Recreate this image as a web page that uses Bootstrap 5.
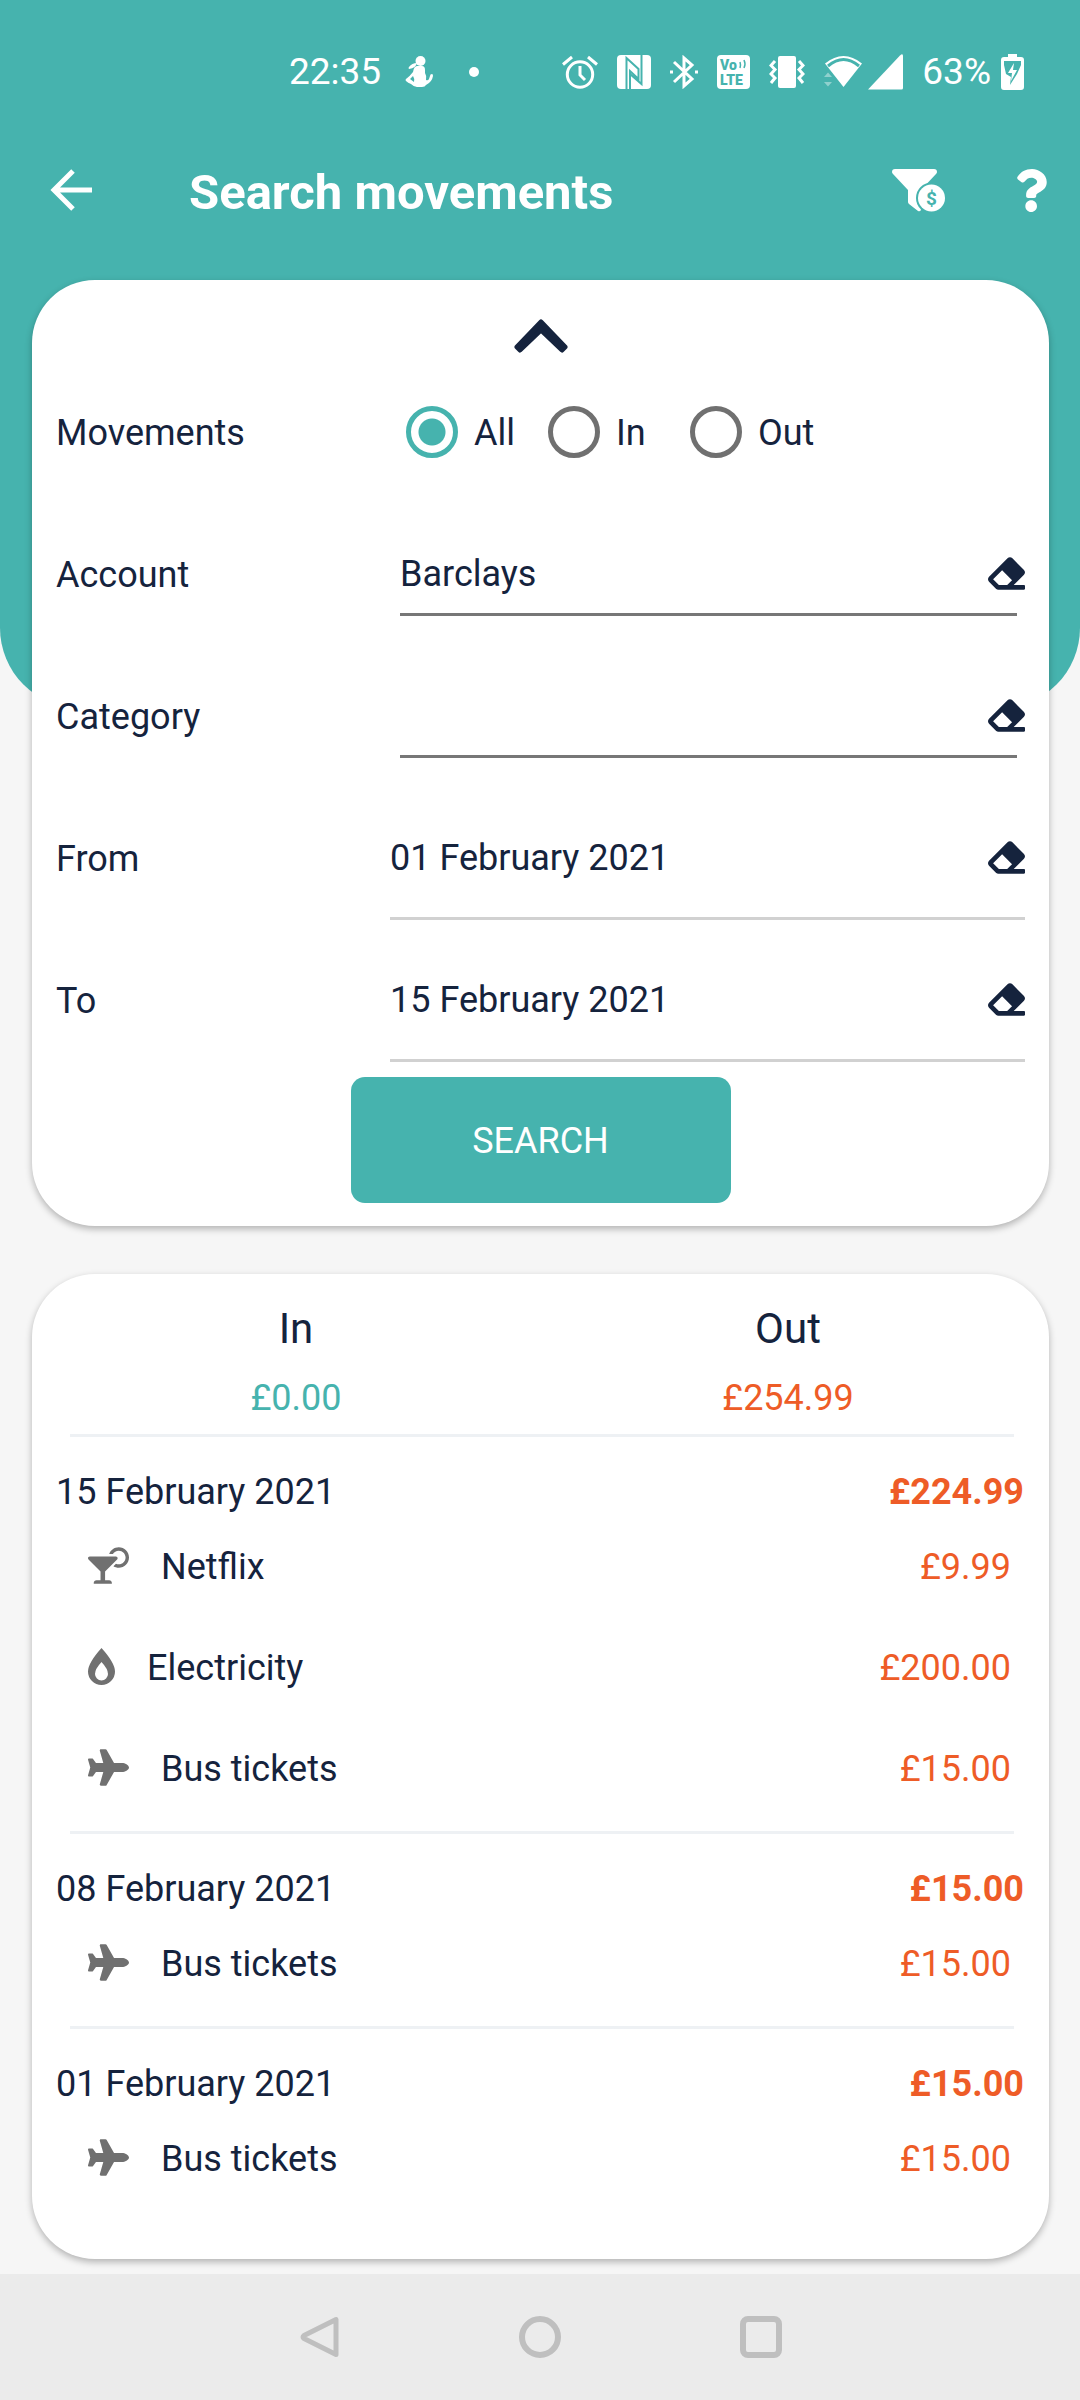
<!DOCTYPE html>
<html lang="en">
<head>
<meta charset="utf-8">
<meta name="viewport" content="width=device-width, initial-scale=1">
<title>Search movements</title>
<link href="https://cdn.jsdelivr.net/npm/bootstrap@5.3.0/dist/css/bootstrap.min.css" rel="stylesheet">
<style>
  :root { --teal: #46b3ae; --ink: #15233d; --orange: #ee5c27; --muted: #707070; }
  body { font-family: Roboto, "Noto Sans", sans-serif; font-size: 36px; line-height: 42px; color: var(--ink); background: #f6f6f6; }
  svg { display: block; flex: none; }
  .icon-btn { padding: 0; border: 0; background: none; color: inherit; display: block; }

  .hero { background: var(--teal); color: #fff; min-height: 708px; border-radius: 0 0 80px 80px; }
  .status { height: 144px; padding: 0 56px 0 289px; font-size: 37px; }
  .status-icons { gap: 19px; }
  .status-pair { gap: 5px; }
  .status-battery { gap: 10px; }
  .status-dot { width: 10px; height: 10px; margin-left: 36px; }
  .topbar { height: 92px; padding: 0 33px 0 50px; }
  .topbar h1 { font-size: 49px; line-height: 60px; font-weight: 700; margin: 6px 0 0 97px; }
  .topbar-actions { gap: 72px; }

  .content { margin: -428px 31px 14px 32px; }
  .panel { background: #fff; border-radius: 63px; box-shadow: 0 3px 7px rgba(0, 0, 0, .28); }
  .filters { padding: 0 24px 23px; margin-bottom: 48px; }
  .collapse-row { height: 81px; padding-top: 39px; }
  .filter-row { height: 142px; }
  .filter-name { flex: 0 0 334px; padding-top: 2px; }
  .radio-set { padding-left: 16px; }
  .radio-option { flex: 0 0 142px; gap: 16px; }
  .radio-option label { padding-top: 2px; }
  .radio-option .form-check-input { float: none; width: 52px; height: 52px; margin: 0; border: 5px solid var(--muted); background: none; box-shadow: none; }
  .radio-option .form-check-input:checked { border-color: var(--teal); background: radial-gradient(circle, var(--teal) 13px, transparent 14px); }
  .line-input { font-size: 36px; line-height: 42px; color: var(--ink); background: none; border: 0; border-radius: 0; padding: 0 48px 0 0; width: 100%; }
  .line-input:focus { outline: 0; }
  .line-picker { height: 84px; padding-top: 2px; border-bottom: 3px solid #777; }
  .picker-wrap { padding: 0 8px 0 10px; }
  .line-date { height: 124px; padding-top: 3px; border-bottom: 3px solid #d1d1d1; }
  .clear-btn { right: 0; top: 50%; margin-top: -17px; }
  .btn-search { width: 380px; max-width: 100%; height: 126px; margin-top: 6px; font-size: 36px; line-height: 42px; border-radius: 14px; color: #fff; background: var(--teal); border: 0; padding: 2px 0 0; }

  .results { padding: 30px 0 51px; }
  .totals { padding: 0 15px 0 18px; margin-bottom: 15px; }
  .totals h2 { font-size: 42px; line-height: 50px; font-weight: 400; margin: 0 0 23px; }
  .day { border: 0; padding: 0 25px 0 24px; }
  .day::before { content: ""; display: block; height: 3px; margin: 0 10px 34px 14px; background: #eef1f4; }
  .day + .day { margin-top: 13px; }
  .entries { padding: 2px 13px 0 32px; }
  .entry { height: 101px; gap: 32px; }
  .entry span { padding-top: 2px; }
  .entry svg { color: var(--muted); }
  .teal-text { color: var(--teal); }
  .orange-text { color: var(--orange); }

  .sysnav { height: 126px; gap: 179px; background: #ebebeb; color: #bfbfbf; }
</style>
<script src="https://cdn.jsdelivr.net/npm/bootstrap@5.3.0/dist/js/bootstrap.bundle.min.js"></script>
</head>
<body>
<!-- Shared icons -->
<svg width="0" height="0" class="position-absolute" aria-hidden="true">
  <symbol id="eraser" viewBox="0 32 512 448"><path fill="currentColor" d="M497.941 273.941c18.745-18.745 18.745-49.137 0-67.882l-160-160c-18.745-18.745-49.136-18.746-67.883 0l-256 256c-18.745 18.745-18.745 49.137 0 67.882l96 96A48.004 48.004 0 0 0 144 480h356c6.627 0 12-5.373 12-12v-40c0-6.627-5.373-12-12-12H355.883l142.058-142.059zm-302.627-62.627l137.373 137.373L265.373 416H150.628l-80-80 124.686-124.686z"/></symbol>
  <symbol id="plane" viewBox="0 0 576 512"><path fill="currentColor" d="M480 192H365.71L260.61 8.06A16.014 16.014 0 0 0 246.71 0h-65.5c-10.63 0-18.3 10.17-15.38 20.39L214.86 192H112l-43.2-57.6c-3.02-4.03-7.77-6.4-12.8-6.4H16.01C5.6 128-2.04 137.78.49 147.88L32 256 .49 364.12C-2.04 374.22 5.6 384 16.01 384H56c5.04 0 9.78-2.37 12.8-6.4L112 320h102.86l-49.03 171.6c-2.92 10.22 4.75 20.4 15.38 20.4h65.5c5.74 0 11.04-3.08 13.89-8.06L365.71 320H480c35.35 0 96-28.65 96-64s-60.65-64-96-64z"/></symbol>
</svg>

<div class="d-flex flex-column min-vh-100">
  <header class="hero">
    <div class="status d-flex align-items-center">
      <span>22:35</span>
      <svg class="ms-4" width="28" height="32" viewBox="0 0 28 32" fill="#fff" aria-hidden="true"><circle cx="15.500" cy="5" r="5"/><path d="M12 7q-1 5-8 6-1-1 0-2 3-4 8-4z"/><path d="M12 10h5q3 0 3 4v3q2 3 1 7 2 1 3-1l1-3q0-2 2-2 1 0 1 2-1 6-7 9-1 2-4 2h-5q-3 0-6-3-3-1-5-3-1-1 0-2 4-3 7-7 1-6 4-6zM8 20l-3 3 4 3q1-3-1-6z" fill-rule="evenodd"/></svg>
      <span class="status-dot rounded-circle bg-white"></span>
      <div class="status-icons d-flex align-items-center ms-auto">
        <svg width="36" height="34" viewBox="0 0 36 34" fill="none" stroke="#fff" stroke-width="3" aria-hidden="true"><circle cx="18" cy="19.500" r="12.700"/><path d="M18 11v9l5 5M1 9.500l9-7.500M35 9.500l-9-7.500"/></svg>
        <svg width="34" height="34" viewBox="0 0 34 34" aria-hidden="true"><rect width="34" height="34" rx="4" fill="#fff"/><path d="M9.500 34V3L21.500 14V24L13 16V34M24.500 0V29L13 19" fill="none" stroke="#46b3ae" stroke-width="2"/></svg>
        <svg width="28" height="34" viewBox="0 0 28 34" fill="none" stroke="#fff" stroke-width="3" aria-hidden="true"><path d="M4 7l18 17-8 7V3l8 7L4 27"/><path d="M0 17h3M25 17h3"/></svg>
        <svg width="33" height="34" viewBox="0 0 33 34" aria-hidden="true"><rect width="33" height="34" rx="4" fill="#fff"/><g fill="#46b3ae" font-family="Roboto, sans-serif" font-weight="900"><text x="3" y="15" font-size="14">Vo</text><text x="3" y="30" font-size="14">LTE</text></g><path d="M23 7q1 3 0 6M27 5q2 4 0 8" fill="none" stroke="#46b3ae" stroke-width="1.500"/></svg>
        <svg width="36" height="34" viewBox="0 0 36 34" aria-hidden="true"><rect x="9" y="1" width="18" height="32" rx="2" fill="#fff"/><path d="M6 6l-4 4.500 4 4-4 4.500 4 4-4 5M30 6l4 4.500-4 4 4 4.500-4 4 4 5" fill="none" stroke="#fff" stroke-width="3"/></svg>
        <div class="status-pair d-flex align-items-center">
          <svg width="39" height="36" viewBox="0 0 39 36" aria-hidden="true"><path d="M1 9.500Q19.500-5.500 38 9.500L19.500 33z" fill="#fff"/><path d="M4 12Q19.500-1 35 12" fill="none" stroke="#46b3ae" stroke-width="3"/><path d="M0 23l4-4.500L8 23zM0 28l4 4.500L8 28z" fill="#8fd1ce"/></svg>
          <svg width="35" height="36" viewBox="0 0 35 36" aria-hidden="true"><path d="M0 35.500L32 1.500Q35-1 35 2V34q0 1.500-1.500 1.500z" fill="#fff"/></svg>
        </div>
        <div class="status-battery d-flex align-items-center">
          <span>63%</span>
          <svg width="23" height="36" viewBox="0 0 23 36" aria-hidden="true"><path d="M7 0h9v3h4q3 0 3 3v27q0 3-3 3H3q-3 0-3-3V6q0-3 3-3h4z" fill="#fff"/><path d="M3 7h17v4l-4 9-7 11 1-8-5-3-2-9z" fill="#46b3ae"/><path d="M13 9l-6 10h4l-1 8 6-11h-4z" fill="#fff"/></svg>
        </div>
      </div>
    </div>
    <div class="topbar d-flex align-items-center">
      <a href="#" class="text-white" aria-label="Back"><svg width="42" height="42" viewBox="0 0 42 42" fill="none" stroke="#fff" stroke-width="5"><path d="M42 21H4M23 2L4 21l19 19"/></svg></a>
      <h1>Search movements</h1>
      <div class="topbar-actions d-flex ms-auto">
        <button type="button" class="icon-btn" aria-label="Filter by amount"><svg width="53" height="43" viewBox="0 0 53 43"><path d="M3 0H42q3 0 3 3 0 1-1 2L29 21v19q0 3-3 2l-9-7q-1-1-1-2V21L1 5Q0 4 0 3 0 0 3 0z" fill="#fff"/><circle cx="39.500" cy="29" r="15.500" fill="#46b3ae"/><circle cx="39.500" cy="29" r="13.500" fill="#fff"/><text x="39.500" y="36" text-anchor="middle" font-family="Roboto, sans-serif" font-weight="700" font-size="19" fill="#46b3ae">$</text></svg></button>
        <button type="button" class="icon-btn" aria-label="Help"><svg width="30" height="43" viewBox="25 0 354 512"><path fill="#fff" d="M202.021 0C122.202 0 70.503 32.703 29.914 91.026c-7.363 10.580-5.093 25.086 5.178 32.874l43.138 32.709c10.373 7.865 25.132 6.026 33.253-4.148 25.049-31.381 43.630-49.449 82.757-49.449 30.764 0 68.816 19.799 68.816 49.631 0 22.552-18.617 34.134-48.993 51.164-35.423 19.860-82.299 44.576-82.299 106.405V320c0 13.255 10.745 24 24 24h72.471c13.255 0 24-10.745 24-24v-5.773c0-42.860 125.268-44.645 125.268-160.627C377.504 66.256 286.902 0 202.021 0zM192 373.459c-38.196 0-69.271 31.075-69.271 69.271 0 38.195 31.075 69.270 69.271 69.270s69.271-31.075 69.271-69.270-31.075-69.271-69.271-69.271z"/></svg></button>
      </div>
    </div>
  </header>

  <main class="content">
    <form class="panel filters">
      <div class="collapse-row d-flex justify-content-center">
        <button type="button" class="icon-btn align-self-start" aria-label="Collapse filters"><svg width="54" height="34" viewBox="0 0 54 34"><path d="M27 3L51 28l-3 3L27 11 6 31l-3-3z" fill="#15233d" stroke="#15233d" stroke-width="5" stroke-linejoin="round"/></svg></button>
      </div>
      <div class="filter-row d-flex align-items-center" role="radiogroup" aria-labelledby="movements-name">
        <span class="filter-name" id="movements-name">Movements</span>
        <div class="radio-set d-flex flex-grow-1">
          <div class="radio-option d-flex align-items-center"><input class="form-check-input" type="radio" name="movements" id="mv-all" checked><label for="mv-all">All</label></div>
          <div class="radio-option d-flex align-items-center"><input class="form-check-input" type="radio" name="movements" id="mv-in"><label for="mv-in">In</label></div>
          <div class="radio-option d-flex align-items-center"><input class="form-check-input" type="radio" name="movements" id="mv-out"><label for="mv-out">Out</label></div>
        </div>
      </div>
      <div class="filter-row d-flex align-items-center">
        <label class="filter-name" for="account">Account</label>
        <div class="picker-wrap position-relative flex-grow-1">
          <input class="line-input line-picker" type="text" id="account" value="Barclays">
          <button type="button" class="icon-btn clear-btn position-absolute" aria-label="Clear account"><svg width="37" height="33"><use href="#eraser"/></svg></button>
        </div>
      </div>
      <div class="filter-row d-flex align-items-center">
        <label class="filter-name" for="category">Category</label>
        <div class="picker-wrap position-relative flex-grow-1">
          <input class="line-input line-picker" type="text" id="category">
          <button type="button" class="icon-btn clear-btn position-absolute" aria-label="Clear category"><svg width="37" height="33"><use href="#eraser"/></svg></button>
        </div>
      </div>
      <div class="filter-row d-flex align-items-center">
        <label class="filter-name" for="from">From</label>
        <div class="position-relative flex-grow-1">
          <input class="line-input line-date" type="text" id="from" value="01 February 2021">
          <button type="button" class="icon-btn clear-btn position-absolute" aria-label="Clear start date"><svg width="37" height="33"><use href="#eraser"/></svg></button>
        </div>
      </div>
      <div class="filter-row d-flex align-items-center">
        <label class="filter-name" for="to">To</label>
        <div class="position-relative flex-grow-1">
          <input class="line-input line-date" type="text" id="to" value="15 February 2021">
          <button type="button" class="icon-btn clear-btn position-absolute" aria-label="Clear end date"><svg width="37" height="33"><use href="#eraser"/></svg></button>
        </div>
      </div>
      <button type="button" class="btn btn-search d-block mx-auto">SEARCH</button>
    </form>

    <section class="panel results">
      <div class="totals d-flex text-center">
        <div class="flex-fill w-50"><h2>In</h2><div class="teal-text">£0.00</div></div>
        <div class="flex-fill w-50"><h2>Out</h2><div class="orange-text">£254.99</div></div>
      </div>
      <div class="day">
        <div class="d-flex justify-content-between"><span>15 February 2021</span><strong class="orange-text">£224.99</strong></div>
        <ul class="entries list-unstyled mb-0">
          <li class="entry d-flex align-items-center"><svg width="41" height="37" viewBox="0 0 576 512" aria-hidden="true"><path fill="currentColor" d="M296 464h-56V338.780l168.740-168.730c15.520-15.520 4.530-42.050-17.420-42.050H24.680c-21.950 0-32.940 26.530-17.420 42.050L176 338.780V464h-56c-22.090 0-40 17.910-40 40 0 4.420 3.580 8 8 8h240c4.420 0 8-3.580 8-8 0-22.090-17.910-40-40-40zM432 0c-62.610 0-115.350 40.200-135.180 96h52.540c16.650-28.550 47.270-48 82.640-48 52.930 0 96 43.060 96 96s-43.070 96-96 96c-14.040 0-27.290-3.200-39.320-8.640l-35.260 35.260C379.230 279.920 404.590 288 432 288c79.530 0 144-64.470 144-144S511.530 0 432 0z"/></svg><span>Netflix</span><span class="orange-text ms-auto">£9.99</span></li>
          <li class="entry d-flex align-items-center"><svg width="27" height="37" viewBox="0 0 27 37" aria-hidden="true"><path fill="currentColor" fill-rule="evenodd" d="M13.500 0Q27 15 27 23.500A13.500 13.500 0 0 1 0 23.500Q0 15 13.500 0zM13.500 14Q7 21 7 26a6.500 6.500 0 0 0 13 0Q20 21 13.500 14z"/></svg><span>Electricity</span><span class="orange-text ms-auto">£200.00</span></li>
          <li class="entry d-flex align-items-center"><svg width="41" height="37" aria-hidden="true"><use href="#plane"/></svg><span>Bus tickets</span><span class="orange-text ms-auto">£15.00</span></li>
        </ul>
      </div>
      <div class="day">
        <div class="d-flex justify-content-between"><span>08 February 2021</span><strong class="orange-text">£15.00</strong></div>
        <ul class="entries list-unstyled mb-0">
          <li class="entry d-flex align-items-center"><svg width="41" height="37" aria-hidden="true"><use href="#plane"/></svg><span>Bus tickets</span><span class="orange-text ms-auto">£15.00</span></li>
        </ul>
      </div>
      <div class="day">
        <div class="d-flex justify-content-between"><span>01 February 2021</span><strong class="orange-text">£15.00</strong></div>
        <ul class="entries list-unstyled mb-0">
          <li class="entry d-flex align-items-center"><svg width="41" height="37" aria-hidden="true"><use href="#plane"/></svg><span>Bus tickets</span><span class="orange-text ms-auto">£15.00</span></li>
        </ul>
      </div>
    </section>
  </main>

  <nav class="sysnav d-flex justify-content-center align-items-center mt-auto" aria-label="System">
    <button type="button" class="icon-btn" aria-label="Back"><svg width="42" height="42" viewBox="0 0 42 42" fill="none" stroke="currentColor" stroke-width="5" stroke-linejoin="round"><path d="M38 3.500v35L6 22.500q-2-1.500 0-3z"/></svg></button>
    <button type="button" class="icon-btn" aria-label="Home"><svg width="42" height="42" viewBox="0 0 42 42" fill="none" stroke="currentColor" stroke-width="6"><circle cx="21" cy="21" r="18"/></svg></button>
    <button type="button" class="icon-btn" aria-label="Recent apps"><svg width="42" height="42" viewBox="0 0 42 42" fill="none" stroke="currentColor" stroke-width="6"><rect x="3" y="3" width="36" height="36" rx="5"/></svg></button>
  </nav>
</div>
</body>
</html>
